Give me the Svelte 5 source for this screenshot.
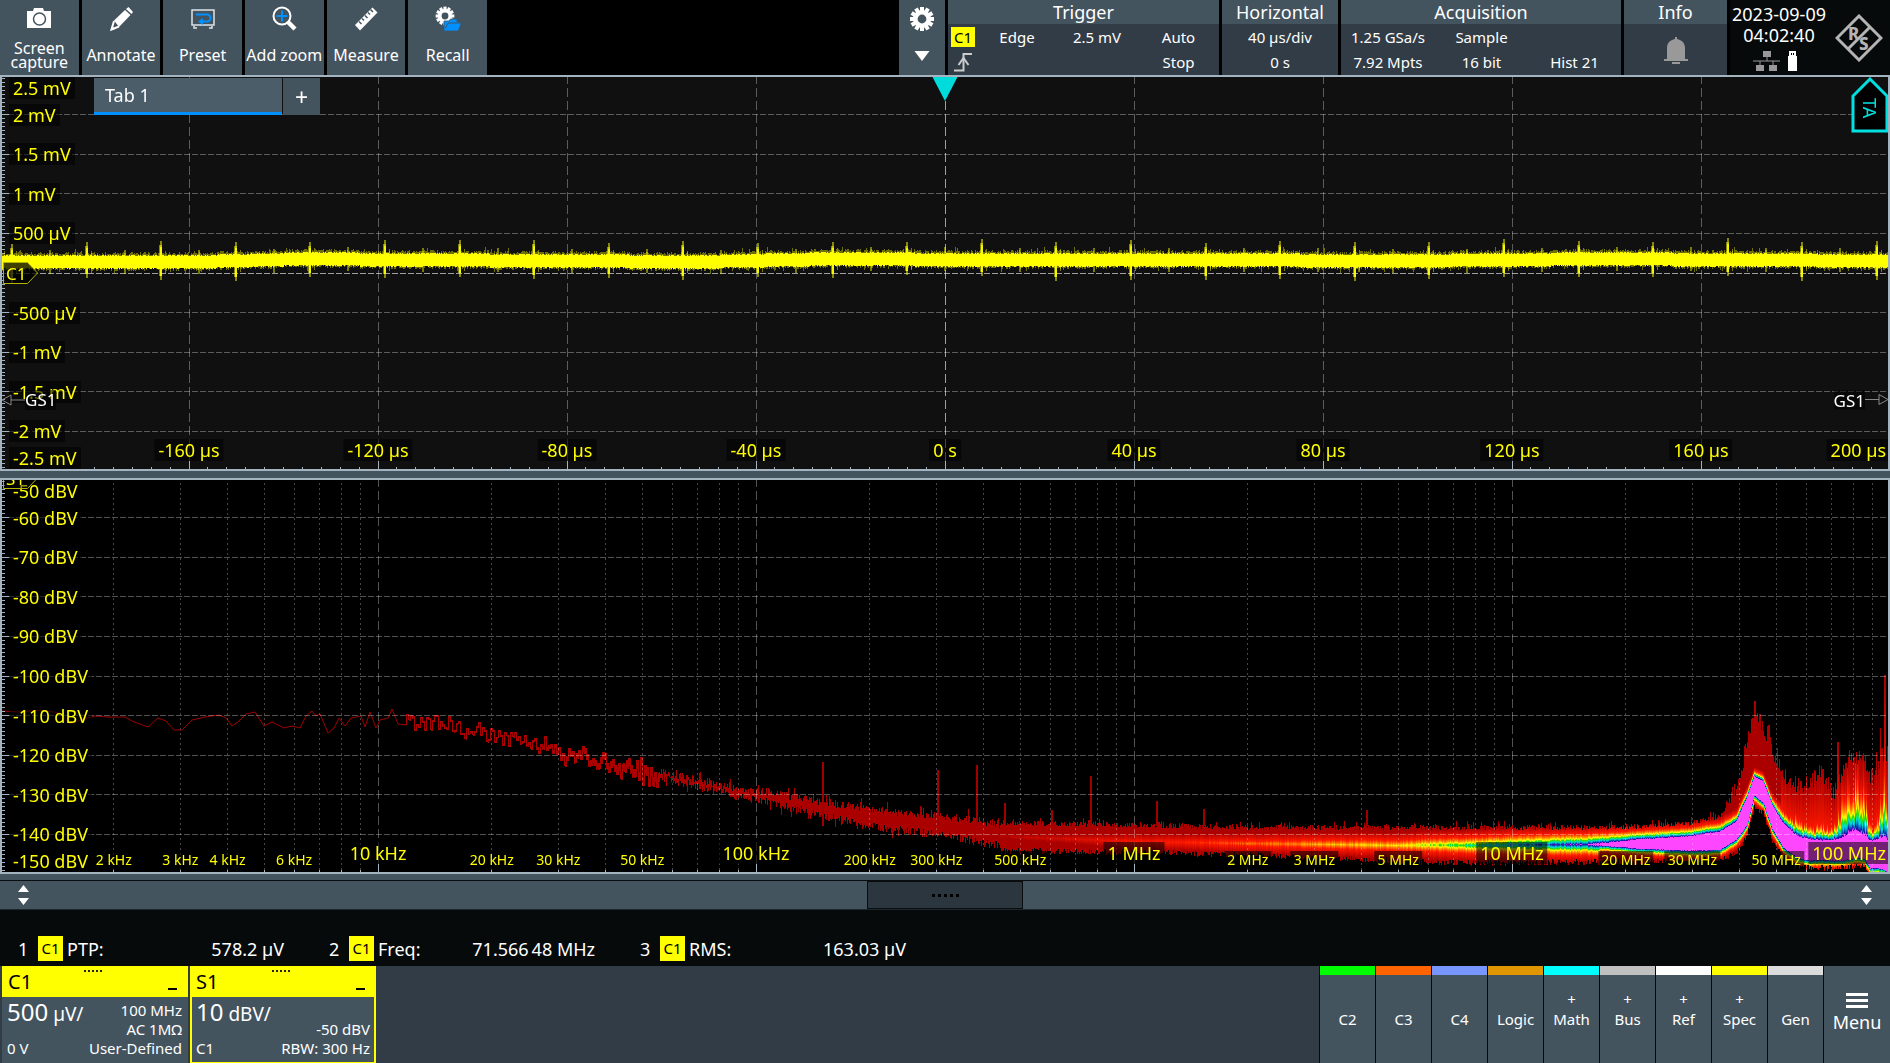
<script>
  import { onMount } from 'svelte';

  // plot canvases share one internal size, css stretches them to the panel
  const W = 1890;
  const H = 396;

  let waveCanvas;
  let specCanvas;

  const tools = ['Screen capture', 'Annotate', 'Preset', 'Add zoom', 'Measure', 'Recall'];

  const voltLabels = ['2.5 mV', '2 mV', '1.5 mV', '1 mV', '500 µV', '', '-500 µV', '-1 mV', '-1.5 mV', '-2 mV', '-2.5 mV'];
  const dbLabels = ['-50', '-60', '-70', '-80', '-90', '-100', '-110', '-120', '-130', '-140', '-150'];
  const timeLabels = ['-160 µs', '-120 µs', '-80 µs', '-40 µs', '0 s', '40 µs', '80 µs', '120 µs', '160 µs', '200 µs'];

  // frequency labels: [Hz, text, is decade]
  const freqLabels = [
    [2e3, '2 kHz'], [3e3, '3 kHz'], [4e3, '4 kHz'], [6e3, '6 kHz'], [1e4, '10 kHz', true],
    [2e4, '20 kHz'], [3e4, '30 kHz'], [5e4, '50 kHz'], [1e5, '100 kHz', true],
    [2e5, '200 kHz'], [3e5, '300 kHz'], [5e5, '500 kHz'], [1e6, '1 MHz', true],
    [2e6, '2 MHz'], [3e6, '3 MHz'], [5e6, '5 MHz'], [1e7, '10 MHz', true],
    [2e7, '20 MHz'], [3e7, '30 MHz'], [5e7, '50 MHz'], [1e8, '100 MHz', true]
  ];

  const measurements = [
    { n: 1, name: 'PTP:', value: '578.2 µV' },
    { n: 2, name: 'Freq:', value: '71.566\u200948 MHz' },
    { n: 3, name: 'RMS:', value: '163.03 µV' }
  ];

  const sources = [
    { name: 'C2', color: '#00ff00' },
    { name: 'C3', color: '#ff6400' },
    { name: 'C4', color: '#7896ff' },
    { name: 'Logic', color: '#e09600' },
    { name: 'Math', color: '#00ffff', add: true },
    { name: 'Bus', color: '#c0c0c0', add: true },
    { name: 'Ref', color: '#ffffff', add: true },
    { name: 'Spec', color: '#ffff00', add: true },
    { name: 'Gen', color: '#dcdcdc' }
  ];

  const gearTeeth = Array.from({ length: 12 }, (_, i) => i * 30);
  const minorY = Array.from({ length: 99 }, (_, i) => i + 1);
  const minorX = Array.from({ length: 95 }, (_, i) => i + 5);
  const tenths = [1, 2, 3, 4, 5, 6, 7, 8, 9];

  const freqX = (hz) => ((Math.log10(hz) - 3) / 5) * 100;

  const logLines = [];
  for (let d = 3; d < 8; d++) {
    for (let m = 1; m < 10; m++) {
      if (d === 3 && m === 1) continue;
      logLines.push({ x: freqX(m * 10 ** d), major: m === 1 });
    }
  }

  function random(seed) {
    let s = seed;
    return () => {
      s = (s * 1664525 + 1013904223) % 4294967296;
      return s / 4294967296;
    };
  }

  // linear interpolation over rows of [x, a, b, ...]
  function lerpRows(rows, x) {
    let i = 0;
    while (i < rows.length - 2 && rows[i + 1][0] < x) i++;
    const a = rows[i];
    const b = rows[i + 1];
    const k = Math.min(1, Math.max(0, (x - a[0]) / (b[0] - a[0])));
    return a.slice(1).map((v, j) => v + (b[j + 1] - v) * k);
  }

  function drawWave(ctx) {
    const rnd = random(7);
    const center = [[0, 187], [200, 187], [300, 184], [420, 185], [700, 187], [830, 184], [1000, 185], [1200, 185], [1400, 186], [1600, 184], [1890, 186]];
    for (let x = 0; x < W; x++) {
      const c = Math.round(lerpRows(center, x)[0]);
      const up = 7 + Math.floor(rnd() * 2);
      const down = 6 + Math.floor(rnd() * 2);
      const fuzzUp = Math.floor(rnd() * 3) + (rnd() > 0.97 ? 3 : 0);
      const fuzzDown = Math.floor(rnd() * 3) + (rnd() > 0.97 ? 3 : 0);
      ctx.fillStyle = 'rgba(255,255,0,0.4)';
      ctx.fillRect(x, c - up - fuzzUp, 1, up + down + fuzzUp + fuzzDown);
      ctx.fillStyle = '#ffff00';
      ctx.fillRect(x, c - up + 1, 1, up + down - 1);
    }
    // switching spikes
    for (let x = 11; x < W; x += 74.6) {
      const c = Math.round(lerpRows(center, x)[0]);
      const px = Math.round(x);
      const up = Math.round(17 + rnd() * 5);
      const down = Math.round(16 + rnd() * 5);
      ctx.fillStyle = 'rgba(255,255,0,0.5)';
      ctx.fillRect(px - 1, c - up + 4, 3, up + down - 8);
      ctx.fillRect(px, c - up, 2, up + down);
      ctx.fillStyle = 'rgba(255,255,0,0.85)';
      ctx.fillRect(px, c - up + 6, 2, up + down - 10);
      ctx.fillStyle = 'rgba(255,255,0,0.45)';
      ctx.fillRect(px + 5, c - 11, 1, 22);
      ctx.fillRect(px + 38, c - 12, 2, 24);
    }
  }

  const palette = [
    [0, 255, 70, 255],
    [0.06, 40, 0, 170],
    [0.2, 0, 150, 200],
    [0.3, 0, 230, 200],
    [0.42, 40, 220, 0],
    [0.55, 255, 255, 0],
    [0.75, 255, 130, 0],
    [1, 255, 25, 0],
    [1.7, 170, 0, 0]
  ];

  const heat = (t) => (t <= 0 ? [255, 70, 255] : lerpRows(palette, t));

  // low end of the spectrum, a thin line
  const specLine = [
    [0, 233], [20, 234], [40, 232], [60, 235], [70, 246], [84, 241], [95, 238], [108, 239], [125, 239],
    [134, 244], [148, 249], [158, 240], [166, 243], [174, 252], [182, 252], [192, 242], [205, 239], [219, 237],
    [226, 240], [232, 248], [238, 244], [246, 236], [255, 234], [264, 248], [272, 244], [284, 250],
    [292, 248], [300, 250], [306, 238], [312, 233], [316, 238], [320, 236], [328, 255], [334, 250],
    [339, 240], [345, 248], [351, 240], [361, 238], [365, 249], [370, 234], [376, 250], [380, 242],
    [388, 240], [392, 231], [398, 246], [406, 247]
  ];

  // x, center, half height of the noise band
  const specBand = [
    [400, 243, 5], [440, 242, 6], [463, 254, 6], [480, 252, 7], [500, 258, 5], [538, 264, 7], [569, 276, 6],
    [603, 284, 6], [642, 292, 7], [676, 300, 7], [714, 309, 8], [737, 315, 8], [768, 319, 9], [806, 327, 10],
    [844, 335, 12], [883, 341, 13], [921, 346, 13], [959, 350, 14], [1000, 357, 15]
  ];

  // x, red top, magenta top, magenta bottom, red bottom, fringe
  const specHot = [
    [1000, 342, 377, 339, 373, 12],
    [1133, 345, 376, 350, 374, 12],
    [1247, 347, 375, 355, 377, 12],
    [1330, 347, 374, 358, 380, 12],
    [1398, 347, 374, 360, 383, 12],
    [1430, 347, 372, 361, 384, 12],
    [1470, 347, 371, 363, 385, 12],
    [1511, 347, 369, 364, 385, 12],
    [1590, 347, 366, 366, 384, 11],
    [1640, 346, 361, 370, 384, 9],
    [1690, 343, 358, 372, 382, 9],
    [1720, 336, 353, 371, 381, 9],
    [1736, 306, 343, 361, 376, 8],
    [1747, 262, 318, 346, 357, 7],
    [1754, 232, 298, 317, 329, 6],
    [1763, 244, 303, 324, 335, 6],
    [1772, 268, 327, 350, 363, 7],
    [1783, 294, 345, 369, 379, 12],
    [1797, 306, 358, 379, 388, 14],
    [1810, 300, 361, 382, 390, 11],
    [1820, 290, 362, 381, 390, 13],
    [1833, 312, 362, 382, 390, 11],
    [1842, 292, 359, 382, 390, 32],
    [1855, 276, 351, 379, 388, 42],
    [1864, 282, 357, 380, 388, 34],
    [1870, 298, 362, 390, 396, 13],
    [1876, 290, 362, 389, 396, 12],
    [1884, 270, 358, 391, 396, 50],
    [1890, 296, 366, 396, 399, 14]
  ];

  // narrow peaks [x, top]
  const specSpurs = [
    [822, 284], [937, 292], [976, 287], [1004, 325], [1051, 332], [1090, 298], [1156, 323],
    [1203, 331], [1366, 332]
  ];

  // tall peaks of the wide band [x, top]
  const specPeaks = [
    [1754, 223], [1755, 223], [1768, 247], [1769, 247], [1777, 270], [1795, 298], [1819, 287], [1837, 264],
    [1838, 264], [1849, 272], [1856, 274], [1865, 278], [1876, 274], [1880, 250], [1884, 197], [1885, 197],
    [1887, 268]
  ];

  function drawSpectrum(ctx) {
    const rnd = random(42);
    ctx.strokeStyle = '#a00000';
    ctx.lineWidth = 1;
    ctx.beginPath();
    specLine.forEach(([x, y], i) => (i ? ctx.lineTo(x, y) : ctx.moveTo(x, y)));
    ctx.stroke();

    let prev = 245;
    ctx.fillStyle = '#aa0000';
    for (let x = 406; x < 1000; x++) {
      const [c, h] = lerpRows(specBand, x);
      if (x < 660) {
        // every second column gets a new level
        const y = x % 2 ? prev : c + (rnd() + rnd() - 1) * h * 1.9;
        const top = Math.min(y, prev);
        const fill = Math.max(0, (x - 520) / 35);
        ctx.fillRect(x, Math.round(top - fill), 1, Math.round(Math.abs(y - prev) + 2 + fill * 2));
        prev = y;
      } else {
        const top = c - h + rnd() * 8 - (rnd() > 0.9 ? 6 : 0);
        const bottom = c + h - rnd() * 8 + (rnd() > 0.94 ? 6 : 0);
        ctx.fillRect(x, Math.round(top), 1, Math.round(bottom - top));
      }
    }

    // density colored part, column by column
    for (let x = 1000; x < W; x++) {
      let [top, hotTop, hotBottom, bottom, fringe] = lerpRows(specHot, x);
      if (x < 1730) top += rnd() * 5 - (rnd() > 0.9 ? 4 : 0);
      else top += (rnd() - 0.35) * 18;
      bottom += (rnd() - 0.6) * 6;
      const peak = specPeaks.find((p) => p[0] === x);
      if (peak) top = peak[1];
      const center = (hotTop + hotBottom) / 2;
      const half = (hotBottom - hotTop) / 2;
      const jitter = (rnd() - 0.5) * 0.15;
      const stretch = x > 1780 ? 0.75 + rnd() * 0.6 : 1;
      for (let y = Math.round(top); y < bottom; y++) {
        const d = Math.abs(y - center) - half;
        const f = y < center || x < 1600 ? fringe * stretch : 7;
        let t = d / f + (d > 0 ? jitter : 0);
        if (x > 1780 && y < center) t = Math.min(t, 0.9 + (d / (center - half - top)) * 0.8);
        const [r, g, b] = heat(t);
        ctx.fillStyle = `rgb(${r | 0},${g | 0},${b | 0})`;
        ctx.fillRect(x, y, 1, 1);
      }
    }

    ctx.fillStyle = '#a00000';
    for (const [x, top] of specSpurs) {
      ctx.fillRect(x, top, 2, 348 - top);
    }
  }

  onMount(() => {
    drawWave(waveCanvas.getContext('2d'));
    drawSpectrum(specCanvas.getContext('2d'));
  });
</script>

{#snippet gear()}
  <g fill="currentColor">
    {#each gearTeeth as a}
      <rect x="-2" y="-12" width="4" height="6" transform="rotate({a})" />
    {/each}
  </g>
  <circle r="6.7" fill="none" stroke="currentColor" stroke-width="4.6" />
{/snippet}

<div class="scope">
  <header>
    <nav class="tools">
      {#each tools as tool, i}
        <button class="tool">
          <svg viewBox="0 0 28 28" width="28" height="28" aria-hidden="true">
            {#if i === 0}
              <path d="M2 6h6l1-3h9l1 3h7v17H2z" fill="#fff" />
              <circle cx="14.500" cy="14" r="6" fill="none" stroke="#44545f" stroke-width="1.500" />
            {:else if i === 1}
              <path d="M7 15.500L18 5l5.500 5L12 22z M19 4l2.500-2 4.500 5-1.500 2z" fill="#fff" />
              <path d="M7 16l-2.500 8.500L12 21.500" fill="none" stroke="#fff" stroke-width="2" />
              <path d="M4 25l1-4 3 3z" fill="#fff" />
            {:else if i === 2}
              <rect x="3" y="5" width="22" height="15" fill="none" stroke="#dde3e7" stroke-width="1.500" />
              <path d="M5 21v2h3M23 21v2h-3" fill="none" stroke="#dde3e7" stroke-width="1.500" />
              <path d="M7 9.500h11a3.500 3.500 0 0 1 0 7h-5" fill="none" stroke="#0090ff" stroke-width="2" />
              <path d="M14 13v7l-5-3.500z" fill="#0090ff" />
            {:else if i === 3}
              <circle cx="12" cy="11" r="8.500" fill="none" stroke="#fff" stroke-width="2" />
              <path d="M12 5.500v11M6.500 11h11" stroke="#0090ff" stroke-width="2" />
              <path d="M18 17l7 7" stroke="#fff" stroke-width="4.500" />
            {:else if i === 4}
              <path d="M20.500 2.500l5 5-17.500 18-5-5.500z" fill="#fff" />
              <path d="M7 16.500l2.500 2.500M10 13.500l2 2M13 10.500l2.500 2.500M16 7.500l2 2M18.500 4.500l2.500 2.500" stroke="#44545f" stroke-width="1.500" />
            {:else}
              <g transform="translate(11 11) scale(0.78)" color="#fff">{@render gear()}</g>
              <path d="M10 26V16h5l1.500-2H23v3h3l-1 1h2.500L24 26z" fill="#0090ff" stroke="#44545f" stroke-width="0.800" />
              <path d="M11.500 23l2.500-5H26" fill="none" stroke="#44545f" />
            {/if}
          </svg>
          <span>{tool}</span>
        </button>
      {/each}
    </nav>

    <div class="status">
      <button class="settings" aria-label="Settings">
        <svg viewBox="-12 -12 24 24" width="24" height="24" color="#fff">{@render gear()}</svg>
        <svg viewBox="0 0 16 10" width="16" height="10"><path d="M0.500 0h15L8 10z" fill="#fff" /></svg>
      </button>

      <section class="box trigger">
        <h2>Trigger</h2>
        <div class="cells">
          <b class="badge">C1</b><span>Edge</span><span>2.5 mV</span><span>Auto</span>
          <svg viewBox="0 0 20 20" width="20" height="20" aria-hidden="true">
            <path d="M1 18.500h9.500V2H19" fill="none" stroke="#ccc" stroke-width="2" />
            <path d="M5.500 13l5-7 5 7" fill="none" stroke="#ccc" stroke-width="2" />
          </svg>
          <span></span><span></span><span>Stop</span>
        </div>
      </section>

      <section class="box horizontal">
        <h2>Horizontal</h2>
        <div class="cells"><span>40 µs/div</span><span>0 s</span></div>
      </section>

      <section class="box acquisition">
        <h2>Acquisition</h2>
        <div class="cells">
          <span>1.25 GSa/s</span><span>Sample</span><span></span>
          <span>7.92 Mpts</span><span>16 bit</span><span>Hist 21</span>
        </div>
      </section>

      <section class="box info">
        <h2>Info</h2>
        <svg viewBox="0 0 24 27" width="24" height="27" aria-hidden="true">
          <path d="M11 0h2v2c5 1 8 4 8 9v11h3v2H0v-2h3V11c0-5 3-8 8-9zM8 25h8v2H8z" fill="#999" />
        </svg>
      </section>

      <div class="clock">
        <div class="datetime">
          <span>2023-09-09</span>
          <span>04:02:40</span>
          <svg viewBox="0 0 46 20" width="46" height="20" aria-hidden="true">
            <path d="M11 0h8v6h-8zM4 14h8v6H4zM17 14h8v6h-8z" fill="#999" />
            <path d="M15 6v4M1 10h27M8 10v4M21 10v4" stroke="#999" />
            <path d="M37 0h7v5h1v15H36V5h1z" fill="#fff" />
            <path d="M39 2h1v2h-1zM41 2h1v2h-1z" fill="#000" />
          </svg>
        </div>
        <svg viewBox="0 0 48 48" width="48" height="48" class="logo" aria-hidden="true">
          <path d="M24 2l22 22-22 22L2 24z" fill="none" stroke="#b4b4b4" stroke-width="3" />
          <path d="M35 13L13 35" stroke="#b4b4b4" stroke-width="3" />
          <text x="13" y="26">R</text>
          <text x="24" y="36">S</text>
        </svg>
      </div>
    </div>
  </header>

  <main>
    <section class="plot wave">
      <svg class="grid" aria-hidden="true">
        {#each tenths as k}
          <line x1="0" x2="100%" y1="{k * 10}%" y2="{k * 10}%" class="h" class:axis={k === 5} />
          <line y1="0" y2="100%" x1="{k * 10}%" x2="{k * 10}%" class="v" class:axis={k === 5} />
        {/each}
        {#each minorY as k}
          <line x1="0" x2={k % 10 ? 5 : 10} y1="{k}%" y2="{k}%" class="tick" />
        {/each}
      </svg>
      <canvas bind:this={waveCanvas} width={W} height={H}></canvas>
      <svg class="ticks" aria-hidden="true">
        {#each minorX as k}
          <line x1="{k}%" x2="{k}%" y1={k % 10 ? 6 : 0} y2="10" class="tick" />
        {/each}
      </svg>
      {#each voltLabels as label, i}
        {#if label}
          <span class="ylabel" class:first={i === 0} class:last={i === 10} style="top: {i * 10}%">{label}</span>
        {/if}
      {/each}
      {#each timeLabels as label, i}
        <span class="xlabel" class:end={i === 9} style="left: {(i + 1) * 10}%">{label}</span>
      {/each}

      <div class="tabs">
        <button class="tab">Tab 1</button>
        <button class="add-tab" aria-label="Add tab">+</button>
      </div>
      <svg class="trigger-pos" viewBox="0 0 25 24" width="25" height="24" aria-hidden="true">
        <path d="M0 0h25L12.500 24z" fill="#00dcdc" />
      </svg>
      <div class="marker ch">
        <svg viewBox="0 0 36 23" width="36" height="23" aria-hidden="true">
          <path d="M0.500 1h24l10 10.500-10 10.500h-24z" />
        </svg>
        <span>C1</span>
      </div>
      <div class="gate left">
        <svg viewBox="0 0 24 12" width="24" height="12" aria-hidden="true"><path d="M10 1L1 6l9 5zM10 6h14" /></svg>
        <span>GS1</span>
      </div>
      <div class="gate right">
        <span>GS1</span>
        <svg viewBox="0 0 24 12" width="24" height="12" aria-hidden="true"><path d="M14 1l9 5-9 5zM0 6h14" /></svg>
      </div>
      <div class="ta">
        <svg viewBox="0 0 38 56" width="38" height="56" aria-hidden="true">
          <path d="M19 2l17 17v35H2V19z" fill="#000" stroke="#00e0e0" stroke-width="3" />
        </svg>
        <span>TA</span>
      </div>
    </section>

    <section class="plot spectrum">
      <canvas bind:this={specCanvas} width={W} height={H}></canvas>
      <svg class="grid" aria-hidden="true">
        {#each tenths as k}
          <line x1="0" x2="100%" y1="{k * 10}%" y2="{k * 10}%" class="h" />
        {/each}
        {#each logLines as l}
          <line y1="0" y2="100%" x1="{l.x}%" x2="{l.x}%" class={l.major ? 'v' : 'dots'} />
        {/each}
        {#each minorY as k}
          <line x1="0" x2={k % 10 ? 5 : 10} y1="{k}%" y2="{k}%" class="tick" />
        {/each}
      </svg>
      <svg class="ticks" aria-hidden="true">
        {#each logLines as l}
          <line x1="{l.x}%" x2="{l.x}%" y1={l.major ? 0 : 6} y2="10" class="tick" />
        {/each}
      </svg>
      {#each dbLabels as label, i}
        <span class="ylabel" class:first={i === 0} class:last={i === 10} style="top: {i * 10}%">{label} dBV</span>
      {/each}
      {#each freqLabels as [hz, label, major]}
        <span class="xlabel" class:small={!major} class:end={hz === 1e8} style="left: {freqX(hz)}%">{label}</span>
      {/each}
      <div class="marker sp">
        <svg viewBox="0 0 36 23" width="36" height="23" aria-hidden="true">
          <path d="M0.500 1h24l10 10.500-10 10.500h-24z" />
        </svg>
        <span>S1</span>
      </div>
    </section>
  </main>

  <div class="splitter">
    <button class="arrows" aria-label="Resize left">
      <svg viewBox="0 0 11 20" width="11" height="20"><path d="M5.500 0l5.500 7H0zM0 13h11l-5.500 7z" fill="#fff" /></svg>
    </button>
    <button class="thumb" aria-label="Results bar"><i></i><i></i><i></i><i></i><i></i></button>
    <button class="arrows" aria-label="Resize right">
      <svg viewBox="0 0 11 20" width="11" height="20"><path d="M5.500 0l5.500 7H0zM0 13h11l-5.500 7z" fill="#fff" /></svg>
    </button>
  </div>

  <div class="results">
    {#each measurements as m}
      <div class="result">
        <span class="num">{m.n}</span>
        <b class="badge">C1</b>
        <span>{m.name}</span>
        <span class="value">{m.value}</span>
      </div>
    {/each}
  </div>

  <footer>
    <section class="signal">
      <div class="signal-head">
        <span>C1</span>
        <div class="grip"><i></i><i></i><i></i><i></i><i></i></div>
        <button aria-label="Minimize C1"></button>
      </div>
      <div class="signal-body">
        <div><span class="scale"><big>500</big> µV/</span><span>0 V</span></div>
        <div class="right"><span>100 MHz</span><span>AC 1MΩ</span><span>User-Defined</span></div>
      </div>
    </section>
    <section class="signal selected">
      <div class="signal-head">
        <span>S1</span>
        <div class="grip"><i></i><i></i><i></i><i></i><i></i></div>
        <button aria-label="Minimize S1"></button>
      </div>
      <div class="signal-body">
        <div><span class="scale"><big>10</big> dBV/</span><span>C1</span></div>
        <div class="right"><span></span><span>-50 dBV</span><span>RBW: 300 Hz</span></div>
      </div>
    </section>

    <nav class="sources">
      {#each sources as s}
        <button class="source">
          <i style="background: {s.color}"></i>
          <span class="plus">{s.add ? '+' : ''}</span>
          <span>{s.name}</span>
        </button>
      {/each}
      <button class="menu">
        <svg viewBox="0 0 22 15" width="22" height="15" aria-hidden="true"><path d="M0 0h22v3H0zM0 6h22v3H0zM0 12h22v3H0z" fill="#fff" /></svg>
        <span>Menu</span>
      </button>
    </nav>
  </footer>
</div>

<style>
  :global(body) {
    margin: 0;
    background: #000;
  }
  .scope {
    display: flex;
    flex-direction: column;
    min-height: 100vh;
    font-family: 'Noto Sans', sans-serif;
    font-size: 16px;
    line-height: 20px;
    color: #fff;
    background: #060a0b;
    white-space: nowrap;
    overflow: hidden;
  }
  button {
    margin: 0;
    padding: 0;
    border: none;
    font: inherit;
    color: inherit;
    background: #44545f;
    cursor: pointer;
  }
  svg {
    display: block;
  }

  /* top bar */
  header {
    display: flex;
    justify-content: space-between;
    height: 75px;
    background: #000;
  }
  .tools {
    display: grid;
    grid-template-columns: repeat(6, 1fr);
    gap: 3px;
    width: 487px;
  }
  .tool {
    display: flex;
    flex-direction: column;
    align-items: center;
    padding-top: 5px;
  }
  .tool span {
    flex: 1;
    display: flex;
    align-items: center;
    padding-top: 2px;
    line-height: 14px;
    white-space: normal;
  }
  .tool:first-child span {
    width: 60px;
  }
  .tool:nth-child(4) span {
    white-space: nowrap;
  }
  .status {
    display: flex;
    gap: 3px;
  }
  .settings {
    display: flex;
    flex-direction: column;
    align-items: center;
    gap: 20px;
    width: 46px;
    padding-top: 7px;
  }
  .box {
    display: flex;
    flex-direction: column;
    background: #323c46;
  }
  h2 {
    margin: 0;
    font-size: 18px;
    font-weight: 400;
    line-height: 24px;
    text-align: center;
    background: #44545f;
  }
  .cells {
    flex: 1;
    display: grid;
    grid-auto-rows: 25px;
    align-items: center;
    justify-items: center;
    font-size: 15px;
  }
  .trigger .cells {
    grid-template-columns: 30px 78px 82px 81px;
  }
  .horizontal {
    width: 116px;
  }
  .acquisition .cells {
    grid-template-columns: 94px 93px 93px;
  }
  .info {
    width: 103px;
  }
  .info svg {
    margin: 13px auto 0;
  }
  .badge {
    width: 24px;
    font-size: 15px;
    font-weight: 400;
    line-height: 20px;
    text-align: center;
    color: #000;
    background: #ffff00;
  }
  .clock {
    display: flex;
    align-items: center;
    gap: 7px;
    width: 160px;
    background: #060a0b;
  }
  .datetime {
    display: flex;
    flex-direction: column;
    align-items: center;
    width: 98px;
    font-size: 18px;
    line-height: 23px;
  }
  .datetime span:first-child {
    line-height: 20px;
  }
  .datetime svg {
    margin: 4px 9px 0 0;
  }
  .logo text {
    font-size: 17px;
    font-weight: 800;
    fill: #b4b4b4;
  }

  /* plots */
  main {
    flex: 1;
    display: flex;
    flex-direction: column;
    gap: 7px;
    padding-bottom: 6px;
    background: #44545f;
  }
  .plot {
    position: relative;
    flex: 1;
    min-height: 240px;
    overflow: hidden;
    background: #000;
  }
  .plot.wave {
    background: #101010;
  }
  .plot::after {
    content: '';
    position: absolute;
    inset: 0;
    border: 2px solid #a3b3bf;
    pointer-events: none;
  }
  canvas,
  .grid {
    position: absolute;
    inset: 0;
    width: 100%;
    height: 100%;
  }
  .ticks {
    position: absolute;
    left: 0;
    bottom: 0;
    width: 100%;
    height: 10px;
  }
  line {
    shape-rendering: crispEdges;
    stroke: rgba(255, 255, 255, 0.32);
  }
  .h {
    stroke-dasharray: 6 2;
  }
  .v {
    stroke-dasharray: 9 4;
  }
  .dots {
    stroke: rgba(255, 255, 255, 0.27);
    stroke-dasharray: 2 3;
  }
  .axis {
    stroke: rgba(255, 255, 255, 0.6);
  }
  .tick {
    stroke: #a3b3bf;
  }
  .ylabel,
  .xlabel {
    position: absolute;
    padding: 0 4px;
    font-size: 18px;
    line-height: 22px;
    color: #ffff00;
    background: rgba(0, 0, 0, 0.55);
  }
  .ylabel {
    left: 9px;
    transform: translateY(-50%);
  }
  .ylabel.first {
    transform: translateY(2px);
  }
  .ylabel.last {
    transform: translateY(-24px);
  }
  .xlabel {
    bottom: 10px;
    transform: translateX(-50%);
  }
  .xlabel.small {
    bottom: 5px;
    padding: 0 3px;
    font-size: 14px;
    line-height: 18px;
  }
  .xlabel.end {
    transform: translateX(-100%);
  }
  .tabs {
    position: absolute;
    top: 3px;
    left: 94px;
    display: flex;
    gap: 1px;
    font-size: 18px;
  }
  .tab {
    width: 188px;
    height: 37px;
    padding-left: 11px;
    text-align: left;
    background: #4b5d69;
    border-bottom: 3px solid #0090ff;
  }
  .add-tab {
    width: 37px;
    height: 37px;
    font-size: 23px;
  }
  .trigger-pos {
    position: absolute;
    top: 2px;
    left: 50%;
    transform: translateX(-50%);
  }
  .marker {
    position: absolute;
    left: 3px;
    top: 50%;
    transform: translateY(-50%);
    color: #ffff00;
    line-height: 23px;
  }
  .marker.sp {
    top: 0;
  }
  .marker path {
    fill: rgba(0, 0, 0, 0.75);
    stroke: #b4b400;
  }
  .marker.sp path {
    fill: rgba(0, 0, 0, 0.4);
  }
  .marker span {
    position: absolute;
    left: 3px;
    top: 0;
    font-size: 17px;
  }
  .gate {
    position: absolute;
    top: 82%;
    display: flex;
    align-items: center;
    transform: translateY(-50%);
    font-size: 17px;
  }
  .gate span {
    background: rgba(0, 0, 0, 0.55);
  }
  .gate path {
    fill: none;
    stroke: #888;
  }
  .gate.left {
    left: 1px;
  }
  .gate.right {
    right: 1px;
  }
  .ta {
    position: absolute;
    top: 2px;
    right: 1px;
    color: #00e0e0;
  }
  .ta span {
    position: absolute;
    top: 21px;
    left: 9px;
    writing-mode: vertical-rl;
    font-size: 18px;
  }

  /* splitter */
  .splitter {
    display: flex;
    justify-content: space-between;
    height: 28px;
    border-top: 1px solid #0a0d0f;
    border-bottom: 1px solid #1e2830;
    background: #44545f;
  }
  .arrows {
    padding: 0 18px;
  }
  .thumb {
    display: flex;
    align-items: center;
    justify-content: center;
    gap: 3px;
    width: 156px;
    background: #2c363e;
    border: 1px solid #0a0d0f;
  }
  .thumb i {
    width: 3px;
    height: 3px;
    background: #000;
  }

  /* measurement row */
  .results {
    display: flex;
    align-items: flex-end;
    height: 56px;
    font-size: 18px;
  }
  .result {
    display: flex;
    align-items: center;
    width: 266px;
    padding: 0 27px 5px 18px;
  }
  .num {
    width: 20px;
  }
  .result .badge {
    width: 25px;
    margin-right: 4px;
    line-height: 25px;
  }
  .value {
    margin-left: auto;
  }

  /* bottom bar */
  footer {
    display: flex;
    gap: 2px;
    height: 97px;
    padding-left: 2px;
    background: #323c46;
  }
  .signal {
    display: flex;
    flex-direction: column;
    width: 186px;
    background: #44545f;
  }
  .signal-head {
    display: grid;
    grid-template-columns: 1fr auto 1fr;
    height: 31px;
    padding: 0 11px 0 6px;
    font-size: 20px;
    line-height: 32px;
    color: #000;
    background: #ffff00;
  }
  .grip {
    display: flex;
    gap: 2px;
    padding-top: 4px;
  }
  .grip i {
    width: 2px;
    height: 2px;
    background: #222;
  }
  .signal-head button {
    place-self: end;
    width: 9px;
    height: 2px;
    margin-bottom: 8px;
    background: #000;
  }
  .signal-body {
    flex: 1;
    display: flex;
    justify-content: space-between;
    padding: 4px 6px 6px 5px;
    font-size: 15px;
    line-height: 19px;
  }
  .signal-body div {
    display: flex;
    flex-direction: column;
    justify-content: space-between;
  }
  .right {
    text-align: right;
  }
  .right span {
    height: 19px;
  }
  .scale {
    font-size: 19px;
    line-height: 22px;
  }
  big {
    font-size: 24px;
  }
  .selected .signal-body {
    padding: 4px 4px 4px 4px;
    border: 2px solid #ffff00;
    border-top: none;
  }
  .sources {
    display: flex;
    gap: 1px;
    margin-left: auto;
    padding-left: 1px;
    background: #060a0b;
  }
  .source {
    display: flex;
    flex-direction: column;
    align-items: center;
    width: 55px;
    font-size: 15px;
  }
  .source i {
    width: 100%;
    height: 9px;
  }
  .plus {
    height: 20px;
    margin-top: 14px;
  }
  .menu {
    display: flex;
    flex-direction: column;
    align-items: center;
    gap: 4px;
    width: 66px;
    padding-top: 27px;
    font-size: 18px;
  }
</style>
